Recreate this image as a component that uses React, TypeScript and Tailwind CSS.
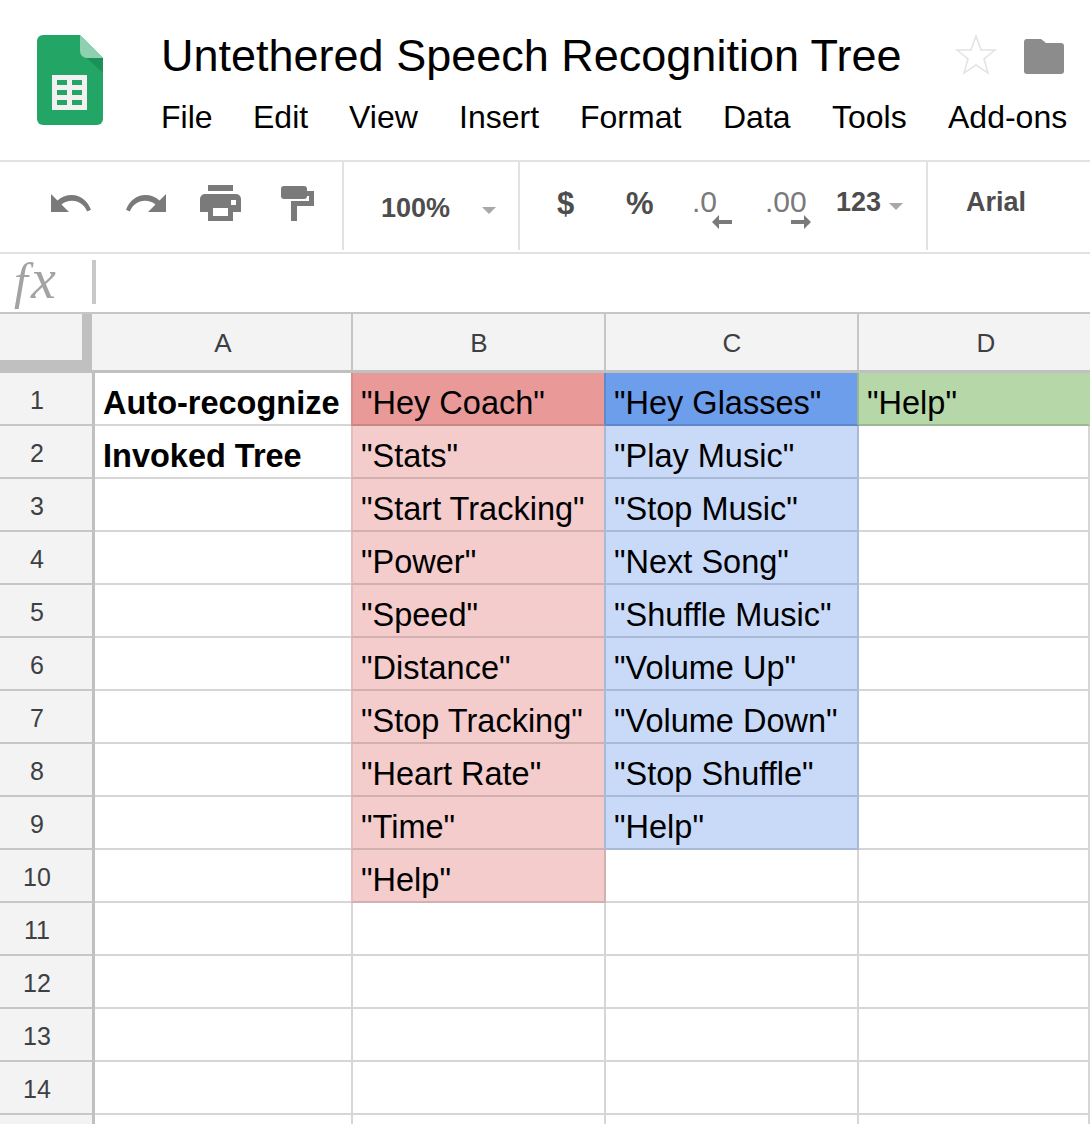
const FONT = "font-['Liberation_Sans',Arial,sans-serif]";

const menus: [string, string][] = [
  ["File", "w-[92px]"],
  ["Edit", "w-[96px]"],
  ["View", "w-[110px]"],
  ["Insert", "w-[121px]"],
  ["Format", "w-[143px]"],
  ["Data", "w-[109px]"],
  ["Tools", "w-[116px]"],
  ["Add-ons", "w-[140px]"],
];

type Cell = { t: string; bg: string; line: string; side: string; left?: string };
const red: Cell[] = ["Stats", "Start Tracking", "Power", "Speed", "Distance", "Stop Tracking", "Heart Rate", "Time", "Help"].map((t, i) => ({
  t: `"${t}"`,
  bg: "bg-[#f4cccc]",
  line: "border-b-[#d3b0b0]",
  side: i === 8 ? "border-r-[#d3b0b0]" : "border-r-[#a9bad6]",
  left: "border-l-[#e3bcbc]",
}));
const blue: Cell[] = ["Play Music", "Stop Music", "Next Song", "Shuffle Music", "Volume Up", "Volume Down", "Stop Shuffle", "Help"].map((t) => ({
  t: `"${t}"`,
  bg: "bg-[#c9daf8]",
  line: "border-b-[#a9bad6]",
  side: "border-r-[#a9bad6]",
}));

function Logo() {
  return (
    <svg width="66" height="90" viewBox="0 0 66 90" className="shrink-0">
      <path d="M6 0H43L66 23V84a6 6 0 0 1-6 6H6a6 6 0 0 1-6-6V6a6 6 0 0 1 6-6Z" fill="#23a566" />
      <path d="M43 17 66 23V38L43 17Z" fill="#1c8a56" opacity="0.75" />
      <path d="M43 0 66 23H50a7 7 0 0 1-7-7V0Z" fill="#8ed1b1" />
      <rect x="15" y="40" width="35" height="35" fill="#f1f1f1" />
      <g fill="#23a566">
        <rect x="20" y="45" width="10" height="5" />
        <rect x="35" y="45" width="10" height="5" />
        <rect x="20" y="55" width="10" height="5" />
        <rect x="35" y="55" width="10" height="5" />
        <rect x="20" y="65" width="10" height="5" />
        <rect x="35" y="65" width="10" height="5" />
      </g>
    </svg>
  );
}

function Undo({ flip }: { flip?: boolean }) {
  return (
    <svg width="40" height="18" viewBox="0 0 40 18" className={flip ? "-scale-x-100" : ""}>
      <path d="M0 0V18H18L10.5 10.5C13.5 8 17 6.8 21 6.8C28 6.8 33.5 11 36.2 17.5L40 15.8C36.5 6.5 29 1 21 1C15 1 10 3 6.5 6.5L0 0Z" fill="#7a7a7a" />
    </svg>
  );
}

function Printer() {
  return (
    <svg width="42" height="36" viewBox="0 0 42 36">
      <path d="M8 0H33V6H8Z" fill="#7a7a7a" />
      <path fillRule="evenodd" d="M5 9H36A5 5 0 0 1 41 14V27H33V36H8V27H0V14A5 5 0 0 1 5 9ZM13 23V31H28V23ZM31 15V20H36V15Z" fill="#7a7a7a" />
    </svg>
  );
}

function Roller() {
  return (
    <svg width="33" height="35" viewBox="0 0 33 35">
      <rect x="0" y="0" width="26" height="13" rx="3" fill="#7a7a7a" />
      <path d="M26 5H33V20H16V35H10V15H28V10H26Z" fill="#7a7a7a" />
    </svg>
  );
}

function Caret({ className }: { className: string }) {
  return <span className={`inline-block w-0 h-0 border-x-[7px] border-x-transparent border-t-[7px] border-t-[#a8a8a8] ${className}`} />;
}

function Arrow({ left }: { left?: boolean }) {
  return (
    <svg width="20" height="14" viewBox="0 0 20 14" className={left ? "" : "-scale-x-100"}>
      <path d="M0 7 7 0V5H20V9H7V14Z" fill="#7a7a7a" />
    </svg>
  );
}

function Divider() {
  return <div className="w-[2px] h-[88px] bg-[#e2e2e2] shrink-0" />;
}

function HeaderRow() {
  return (
    <div className="flex h-[61px] border-t-[2px] border-t-[#c6c6c6] border-b-[3px] border-b-[#c0c0c0] bg-[#f3f3f3]">
      <div className="w-[92px] shrink-0 border-r-[10px] border-r-[#c0c0c0] border-b-[10px] border-b-[#c0c0c0]" />
      {["A", "B", "C", "D"].map((c, i) => (
        <div
          key={c}
          className={`${i === 0 ? "w-[261px] pl-[3px]" : "w-[253px] pl-[1px]"} shrink-0 flex items-center justify-center pt-[2px] text-[26px] text-[#3c4043] ${i === 3 ? "" : "border-r-[2px] border-r-[#c6c6c6]"}`}
        >
          {c}
        </div>
      ))}
    </div>
  );
}

function DataCell({ cell, w, leftLine }: { cell?: Cell; w: string; leftLine?: boolean }) {
  return (
    <div
      className={`${w} shrink-0 h-[53px] flex items-center pl-[8px] pt-[10px] text-[32.5px] text-black whitespace-nowrap border-b-[2px] border-r-[2px] ${leftLine ? "border-l-[2px]" : ""} ${
        cell ? `${cell.bg} ${cell.line} ${cell.side} ${cell.left ?? ""}` : "bg-white border-b-[#d6d6d6] border-r-[#d6d6d6] border-l-[#d6d6d6]"
      }`}
    >
      {cell?.t}
    </div>
  );
}

function Row({ n, a, b, c, d }: { n?: number; a?: string; b?: Cell; c?: Cell; d?: Cell }) {
  return (
    <div className="flex h-[53px]">
      <div className="w-[95px] shrink-0 h-[53px] flex items-center justify-center pt-[4px] text-[25px] text-[#3c4043] bg-[#f3f3f3] border-r-[3px] border-r-[#c0c0c0] border-b-[2px] border-b-[#c6c6c6] pr-[18px]">
        {n}
      </div>
      <div className="w-[256px] shrink-0 h-[53px] flex items-center pl-[8px] pt-[10px] text-[32.5px] font-bold text-black whitespace-nowrap border-b-[2px] border-b-[#d6d6d6]">
        {a}
      </div>
      <DataCell w="w-[255px]" cell={b} leftLine />
      <DataCell w="w-[253px]" cell={c} />
      <DataCell w="w-[231px]" cell={d} />
    </div>
  );
}

export default function App() {
  return (
    <div className={`${FONT} w-[1090px] h-[1124px] overflow-hidden bg-white`}>
      <div className="h-[162px] flex border-b-[2px] border-b-[#e2e2e2] pl-[37px] pt-[35px]">
        <Logo />
        <div className="ml-[58px] -mt-[7px] min-w-0">
          <div className="flex items-center h-[56px]">
            <span className="text-[45px] leading-[50px] text-black whitespace-nowrap">Untethered Speech Recognition Tree</span>
            <svg width="42" height="42" viewBox="0 0 42 42" className="ml-[54px] shrink-0 -mt-[2px]">
              <path d="M21 2 26 16H40L29 25 33 39 21 31 9 39 13 25 2 16H16Z" fill="white" stroke="#e2e2e2" strokeWidth="1.5" />
            </svg>
            <svg width="40" height="36" viewBox="0 0 40 36" className="ml-[27px] shrink-0">
              <path d="M3 1H17L22 5H37A3 3 0 0 1 40 8V33A3 3 0 0 1 37 36H3A3 3 0 0 1 0 33V4A3 3 0 0 1 3 1Z" fill="#8c8c8c" />
            </svg>
          </div>
          <div className="flex mt-[14px] text-[32px] leading-[38px] text-black whitespace-nowrap">
            {menus.map(([m, w]) => (
              <span key={m} className={`${w} shrink-0`}>{m}</span>
            ))}
          </div>
        </div>
      </div>

      <div className="h-[92px] flex items-start border-b-[2px] border-b-[#e2e2e2] font-bold text-[#4d4d4d]">
        <div className="w-[342px] h-[88px] flex shrink-0 items-center pl-[51px] pb-[6px]">
          <Undo />
          <span className="ml-[35px]"><Undo flip /></span>
          <span className="ml-[34px]"><Printer /></span>
          <span className="ml-[39px]"><Roller /></span>
        </div>
        <Divider />
        <div className="w-[174px] h-[88px] shrink-0 flex items-center pl-[37px] pt-[5px] text-[27px]">
          <span>100%</span>
          <Caret className="ml-[32px] mt-[3px]" />
        </div>
        <Divider />
        <div className="relative w-[406px] h-[88px] shrink-0">
          <span className="absolute left-[37px] top-[19px] text-[31px]">$</span>
          <span className="absolute left-[106px] top-[19px] text-[31px]">%</span>
          <span className="absolute left-[172px] top-[17px] text-[30px] font-normal text-[#7a7a7a]">.0</span>
          <span className="absolute left-[192px] top-[53px]"><Arrow left /></span>
          <span className="absolute left-[245px] top-[17px] text-[30px] font-normal text-[#7a7a7a]">.00</span>
          <span className="absolute left-[271px] top-[53px]"><Arrow /></span>
          <span className="absolute left-[316px] top-[20px] text-[27px]">123</span>
          <Caret className="absolute left-[369px] top-[41px]" />
        </div>
        <Divider />
        <div className="pl-[38px] h-[80px] flex items-center text-[27px]">Arial</div>
      </div>

      <div className="h-[58px] flex items-center">
        <span className="w-[92px] pl-[14px] font-['Liberation_Serif',serif] italic text-[50px] leading-[48px] text-[#a3a3a3] -mt-[6px] whitespace-nowrap">
          f<span className="text-[56px] ml-[3px]">x</span>
        </span>
        <div className="w-[4px] h-[44px] bg-[#c8c8c8] -mt-[2px]" />
      </div>

      <HeaderRow />

      <div className="flex h-[53px]">
        <div className="w-[95px] shrink-0 flex items-center justify-center pt-[4px] text-[25px] text-[#3c4043] bg-[#f3f3f3] border-r-[3px] border-r-[#c0c0c0] border-b-[2px] border-b-[#c6c6c6] pr-[18px]">1</div>
        <div className="w-[256px] shrink-0 flex items-center pl-[8px] pt-[10px] text-[32.5px] font-bold text-black whitespace-nowrap border-b-[2px] border-b-[#d6d6d6]">Auto-recognize</div>
        <DataCell w="w-[255px]" leftLine cell={{ t: '"Hey Coach"', bg: "bg-[#ea9999]", line: "border-b-[#c98484]", side: "border-r-[#5f89c9]", left: "border-l-[#d88d8d]" }} />
        <DataCell w="w-[253px]" cell={{ t: '"Hey Glasses"', bg: "bg-[#6d9eeb]", line: "border-b-[#5d88cb]", side: "border-r-[#9cb890]" }} />
        <DataCell w="w-[231px]" cell={{ t: '"Help"', bg: "bg-[#b6d7a8]", line: "border-b-[#9cb890]", side: "border-r-[#b6d7a8]" }} />
      </div>
      <Row n={2} a="Invoked Tree" b={red[0]} c={blue[0]} />
      {Array.from({ length: 12 }, (_, i) => i + 3).map((n) => (
        <Row key={n} n={n} b={red[n - 2]} c={blue[n - 2]} />
      ))}
      <Row />
    </div>
  );
}
